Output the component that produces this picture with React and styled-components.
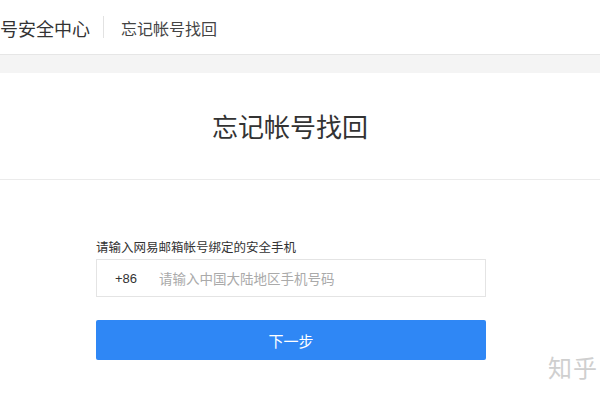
import React from "react";
import styled, { createGlobalStyle } from "styled-components";

const Global = createGlobalStyle`
  html, body { margin: 0; padding: 0; background: #fff; }
  body {
    font-family: "Noto Sans CJK SC", "Noto Sans", "Liberation Sans", sans-serif;
    color: #333;
    width: 600px;
    height: 400px;
    overflow: hidden;
    position: relative;
  }
`;

const Header = styled.header`
  height: 54px;
  border-bottom: 1px solid #e6e6e6;
  display: flex;
  align-items: center;
`;

const Brand = styled.div`
  font-size: 18px;
  color: #333;
  line-height: 1;
  white-space: nowrap;
  margin-top: 2px;
`;

const Divider = styled.div`
  width: 1px;
  height: 22px;
  background: #e2e2e2;
  margin: 0 17px 0 13px;
`;

const SubTitle = styled.div`
  font-size: 16px;
  color: #444;
  line-height: 1;
  margin-top: 1px;
`;

const Band = styled.div`
  height: 18px;
  background: #f4f4f4;
`;

const TitleBar = styled.div`
  height: 106px;
  border-bottom: 1px solid #ebebeb;
  display: flex;
  align-items: center;
  justify-content: center;
  padding-right: 20px;
`;

const Title = styled.h1`
  margin: 0;
  font-size: 26px;
  font-weight: 400;
  color: #333;
  line-height: 1;
`;

const Form = styled.div`
  width: 390px;
  margin: 59px 0 0 96px;
  display: flex;
  flex-direction: column;
`;

const Label = styled.div`
  font-size: 12.5px;
  line-height: 16px;
  color: #333;
  margin-bottom: 4px;
`;

const InputBox = styled.div`
  height: 36px;
  border: 1px solid #e4e4e4;
  display: flex;
  align-items: center;
`;

const Prefix = styled.span`
  font-family: "Liberation Sans", Arial, sans-serif;
  font-size: 13px;
  color: #333;
  margin-left: 18px;
  width: 44px;
`;

const Input = styled.input`
  flex: 1;
  border: none;
  outline: none;
  background: transparent;
  font-family: "Noto Sans CJK SC", sans-serif;
  font-size: 13.5px;
  color: #333;
  padding: 0;
  &::placeholder { color: #aaa; }
`;

const Button = styled.button`
  margin-top: 23px;
  height: 40px;
  border: none;
  border-radius: 2px;
  background: #2f87f5;
  color: #fff;
  font-family: "Noto Sans CJK SC", sans-serif;
  font-size: 15px;
  cursor: pointer;
`;

const Watermark = styled.div`
  position: absolute;
  right: 2px;
  bottom: 21px;
  font-size: 24px;
  line-height: 1;
  color: #cfcfcf;
  letter-spacing: 1px;
  text-shadow: 0 0 2px #fff;
`;

export default function App() {
  return (
    <>
      <Global />
      <Header>
        <Brand>号安全中心</Brand>
        <Divider />
        <SubTitle>忘记帐号找回</SubTitle>
      </Header>
      <Band />
      <TitleBar>
        <Title>忘记帐号找回</Title>
      </TitleBar>
      <Form>
        <Label>请输入网易邮箱帐号绑定的安全手机</Label>
        <InputBox>
          <Prefix>+86</Prefix>
          <Input placeholder="请输入中国大陆地区手机号码" />
        </InputBox>
        <Button>下一步</Button>
      </Form>
      <Watermark>知乎</Watermark>
    </>
  );
}
